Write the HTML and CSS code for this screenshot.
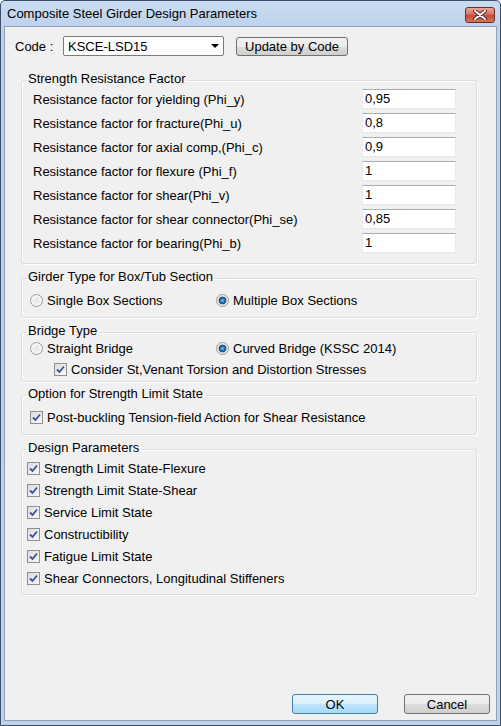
FILE: index.html
```html
<!DOCTYPE html>
<html lang="en">
<head>
    <meta charset="UTF-8">
    <title>Composite Steel Girder Design Parameters</title>
    <link rel="stylesheet" href="styles.css">
</head>
<body>
    <div class="window">
        <div class="titlebar">
            <span class="title">Composite Steel Girder Design Parameters</span>
            <div class="close">
                <svg width="14" height="10" viewBox="0 0 14 10"><path d="M2 1 L12 9 M12 1 L2 9" stroke="#5a2a22" stroke-width="4" stroke-linecap="round"/><path d="M2 1 L12 9 M12 1 L2 9" stroke="#fff" stroke-width="2" stroke-linecap="round"/></svg>
            </div>
        </div>

        <div class="client">
            <div class="code-row">
                <span class="code-label">Code :</span>
                <div class="combo"><span>KSCE-LSD15</span><span class="arrow"></span></div>
                <button class="btn update">Update by Code</button>
            </div>

            <fieldset class="group factors">
                <legend>Strength Resistance Factor</legend>
                <div class="grid">
                    <span>Resistance factor for yielding (Phi_y)</span><div class="field">0,95</div>
                    <span>Resistance factor for fracture(Phi_u)</span><div class="field">0,8</div>
                    <span>Resistance factor for axial comp,(Phi_c)</span><div class="field">0,9</div>
                    <span>Resistance factor for flexure (Phi_f)</span><div class="field">1</div>
                    <span>Resistance factor for shear(Phi_v)</span><div class="field">1</div>
                    <span>Resistance factor for shear connector(Phi_se)</span><div class="field">0,85</div>
                    <span>Resistance factor for bearing(Phi_b)</span><div class="field">1</div>
                </div>
            </fieldset>

            <fieldset class="group girder">
                <legend>Girder Type for Box/Tub Section</legend>
                <div class="opts">
                    <label class="opt first"><span class="radio"></span>Single Box Sections</label>
                    <label class="opt"><span class="radio on"></span>Multiple Box Sections</label>
                </div>
            </fieldset>

            <fieldset class="group bridge">
                <legend>Bridge Type</legend>
                <div class="opts">
                    <label class="opt first"><span class="radio"></span>Straight Bridge</label>
                    <label class="opt"><span class="radio on"></span>Curved Bridge (KSSC 2014)</label>
                </div>
                <label class="opt sub"><span class="check"><svg width="11" height="11" viewBox="0 0 11 11"><path d="M2 5.5 L4.5 8 L9 2.5" stroke="#34519a" stroke-width="1.8" fill="none"/></svg></span>Consider St,Venant Torsion and Distortion Stresses</label>
            </fieldset>

            <fieldset class="group strength">
                <legend>Option for Strength Limit State</legend>
                <label class="opt"><span class="check"><svg width="11" height="11" viewBox="0 0 11 11"><path d="M2 5.5 L4.5 8 L9 2.5" stroke="#34519a" stroke-width="1.8" fill="none"/></svg></span>Post-buckling Tension-field Action for Shear Resistance</label>
            </fieldset>

            <fieldset class="group design">
                <legend>Design Parameters</legend>
                <div class="list">
                    <label class="opt"><span class="check"><svg width="11" height="11" viewBox="0 0 11 11"><path d="M2 5.5 L4.5 8 L9 2.5" stroke="#34519a" stroke-width="1.8" fill="none"/></svg></span>Strength Limit State-Flexure</label>
                    <label class="opt"><span class="check"><svg width="11" height="11" viewBox="0 0 11 11"><path d="M2 5.5 L4.5 8 L9 2.5" stroke="#34519a" stroke-width="1.8" fill="none"/></svg></span>Strength Limit State-Shear</label>
                    <label class="opt"><span class="check"><svg width="11" height="11" viewBox="0 0 11 11"><path d="M2 5.5 L4.5 8 L9 2.5" stroke="#34519a" stroke-width="1.8" fill="none"/></svg></span>Service Limit State</label>
                    <label class="opt"><span class="check"><svg width="11" height="11" viewBox="0 0 11 11"><path d="M2 5.5 L4.5 8 L9 2.5" stroke="#34519a" stroke-width="1.8" fill="none"/></svg></span>Constructibility</label>
                    <label class="opt"><span class="check"><svg width="11" height="11" viewBox="0 0 11 11"><path d="M2 5.5 L4.5 8 L9 2.5" stroke="#34519a" stroke-width="1.8" fill="none"/></svg></span>Fatigue Limit State</label>
                    <label class="opt"><span class="check"><svg width="11" height="11" viewBox="0 0 11 11"><path d="M2 5.5 L4.5 8 L9 2.5" stroke="#34519a" stroke-width="1.8" fill="none"/></svg></span>Shear Connectors, Longitudinal Stiffeners</label>
                </div>
            </fieldset>

            <div class="actions">
                <button class="btn default">OK</button>
                <button class="btn">Cancel</button>
            </div>
        </div>
    </div>
</body>
</html>
```

FILE: styles.css
```css
* { margin: 0; padding: 0; box-sizing: border-box; }
body { font-family: "Liberation Sans", Arial, sans-serif; font-size: 13px; color: #000; background: #fff; }

.window { width: 501px; height: 726px; display: flex; flex-direction: column; border: 1px solid #3d5068; border-radius: 5px 5px 0 0; background: linear-gradient(to bottom, #c9dcf1, #bcd1ea 30px, #bed3eb); padding: 0 3px 4px; }
.titlebar { height: 25px; display: flex; align-items: center; justify-content: space-between; padding: 0 2px 0 3px; }
.title { font-size: 13px; }
.close { width: 30px; height: 16px; margin-top: 2px; border: 1px solid #6b2c25; border-radius: 3px; background: linear-gradient(to bottom, #e9a99b, #d7705f 45%, #c74a34 55%, #d3775c); display: flex; align-items: center; justify-content: center; }

.client { flex: 1; display: flex; flex-direction: column; background: #f0f0f0; border: 1px solid #8ea3bb; }

.code-row { display: flex; align-items: center; height: 20px; margin: 9px 0 0 10px; }
.code-label { width: 48px; }
.combo { width: 161px; height: 20px; display: flex; align-items: center; justify-content: space-between; padding: 0 4px 0 4px; background: #fff; border: 1px solid #7a7a7a; border-radius: 2px; }
.arrow { border-left: 4px solid transparent; border-right: 4px solid transparent; border-top: 4px solid #000; }

.btn { font: inherit; color: #000; height: 20px; border: 1px solid #707070; border-radius: 3px; background: linear-gradient(to bottom, #f2f2f2, #ebebeb 50%, #dddddd 51%, #cfcfcf); }
.btn.update { width: 112px; height: 19px; margin-left: 12px; }
.btn.default { border-color: #3c7fb1; background: linear-gradient(to bottom, #eaf6fd, #d9f0fc 50%, #bee6fd 51%, #a7d9f5); }

.group { margin: 0 19px 0 16px; border: 1px solid #d5dfe5; border-radius: 3px; box-shadow: inset 1px 1px 0 #fff, 1px 1px 0 #fff; }
.group legend { margin-left: 4px; padding: 0 2px 2px; line-height: 14px; }

.factors { margin-top: 16px; }
.factors .grid { display: grid; grid-template-columns: 1fr 94px; row-gap: 4px; align-items: center; padding: 1px 20px 10px 11px; }
.field { height: 20px; line-height: 18px; padding-left: 2px; background: #fff; border: 1px solid #e3e9ef; border-top-color: #abadb3; }

.opts { display: flex; }
.opt { display: flex; align-items: center; gap: 4px; height: 16px; }
.opt.first { width: 186px; }

.radio { width: 13px; height: 13px; border-radius: 50%; border: 1px solid #9a9a9a; background: radial-gradient(circle, #e4e4e4 0, #f6f6f6 5px); }
.radio.on { background: radial-gradient(circle, #7cc0ef 0, #2b78b5 2px, #124a78 3.5px, #d8d8d8 4.2px, #f6f6f6 5.5px); }
.check { width: 13px; height: 13px; display: flex; align-items: center; justify-content: center; border: 1px solid #8f8f8f; background: linear-gradient(135deg, #dcdcdc, #f8f8f8); }

.girder { margin-top: 6px; }
.girder .opts { padding: 6px 8px 9px; }

.bridge { margin-top: 6px; }
.bridge .opts { padding: 0 8px; }
.bridge .sub { margin: 5px 0 4px 32px; }

.strength { margin-top: 5px; }
.strength .opt { margin: 6px 0 9px 8px; }

.design { margin-top: 6px; }
.design .list { padding: 0 5px 5px; }
.design .opt { height: 22px; }

.actions { margin-top: auto; display: flex; justify-content: flex-end; gap: 26px; padding: 0 6px 6px 0; }
.actions .btn { width: 86px; }
```
